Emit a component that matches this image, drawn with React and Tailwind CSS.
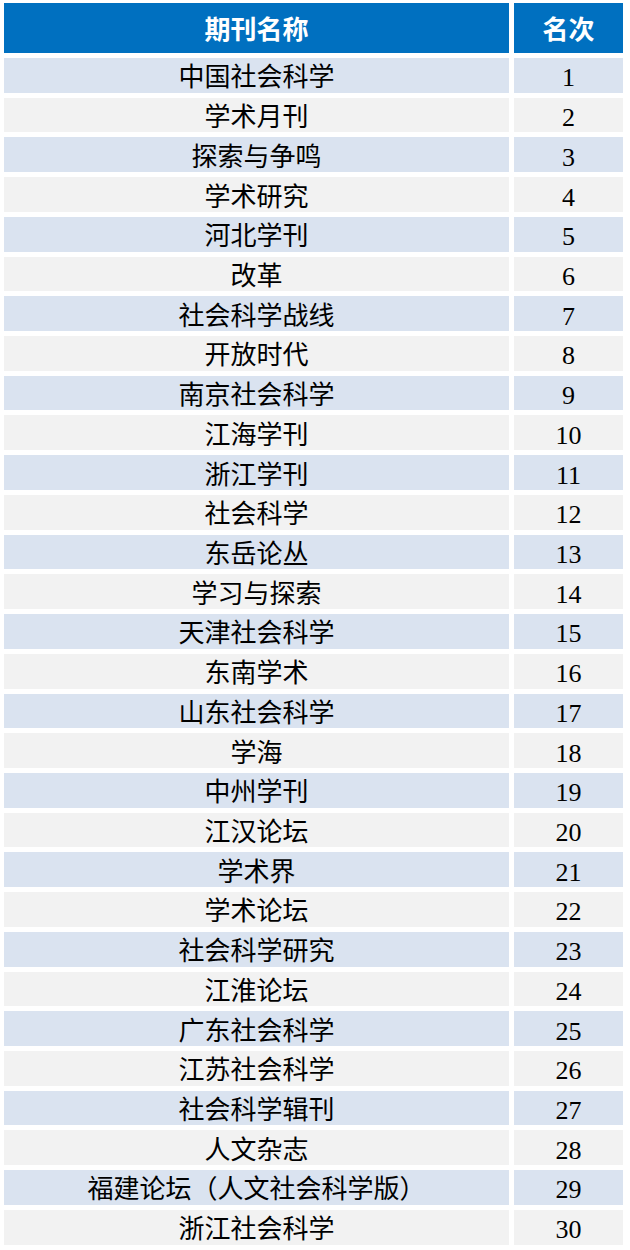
const journals = [
  '中国社会科学',
  '学术月刊',
  '探索与争鸣',
  '学术研究',
  '河北学刊',
  '改革',
  '社会科学战线',
  '开放时代',
  '南京社会科学',
  '江海学刊',
  '浙江学刊',
  '社会科学',
  '东岳论丛',
  '学习与探索',
  '天津社会科学',
  '东南学术',
  '山东社会科学',
  '学海',
  '中州学刊',
  '江汉论坛',
  '学术界',
  '学术论坛',
  '社会科学研究',
  '江淮论坛',
  '广东社会科学',
  '江苏社会科学',
  '社会科学辑刊',
  '人文杂志',
  '福建论坛（人文社会科学版）',
  '浙江社会科学',
]

export default function App() {
  return (
    <div
      className="w-[630px] h-[1250px] bg-white pl-[4px] pt-[3px] overflow-hidden text-black"
      style={{ fontFamily: '"Liberation Serif", "Noto Sans CJK SC", serif' }}
    >
      <div className="grid grid-cols-[505px_109px] gap-x-[5px] gap-y-[5px]">
        <div className="h-[50px] bg-[#0070c0] text-white text-[26px] font-bold leading-none flex items-center justify-center pt-[5px]">
          期刊名称
        </div>
        <div className="h-[50px] bg-[#0070c0] text-white text-[26px] font-bold leading-none flex items-center justify-center pt-[5px]">
          名次
        </div>
        {journals.map((name, i) => {
          const bg = i % 2 === 0 ? 'bg-[#dae3f0]' : 'bg-[#f2f2f2]'
          return [
            <div
              key={`n${i}`}
              className={`h-[34.72px] ${bg} text-[26px] leading-none flex items-center justify-center pt-[6px]`}
            >
              {name}
            </div>,
            <div
              key={`r${i}`}
              className={`h-[34.72px] ${bg} text-[26px] leading-none flex items-center justify-center pt-[6px]`}
            >
              {i + 1}
            </div>,
          ]
        })}
      </div>
    </div>
  )
}
